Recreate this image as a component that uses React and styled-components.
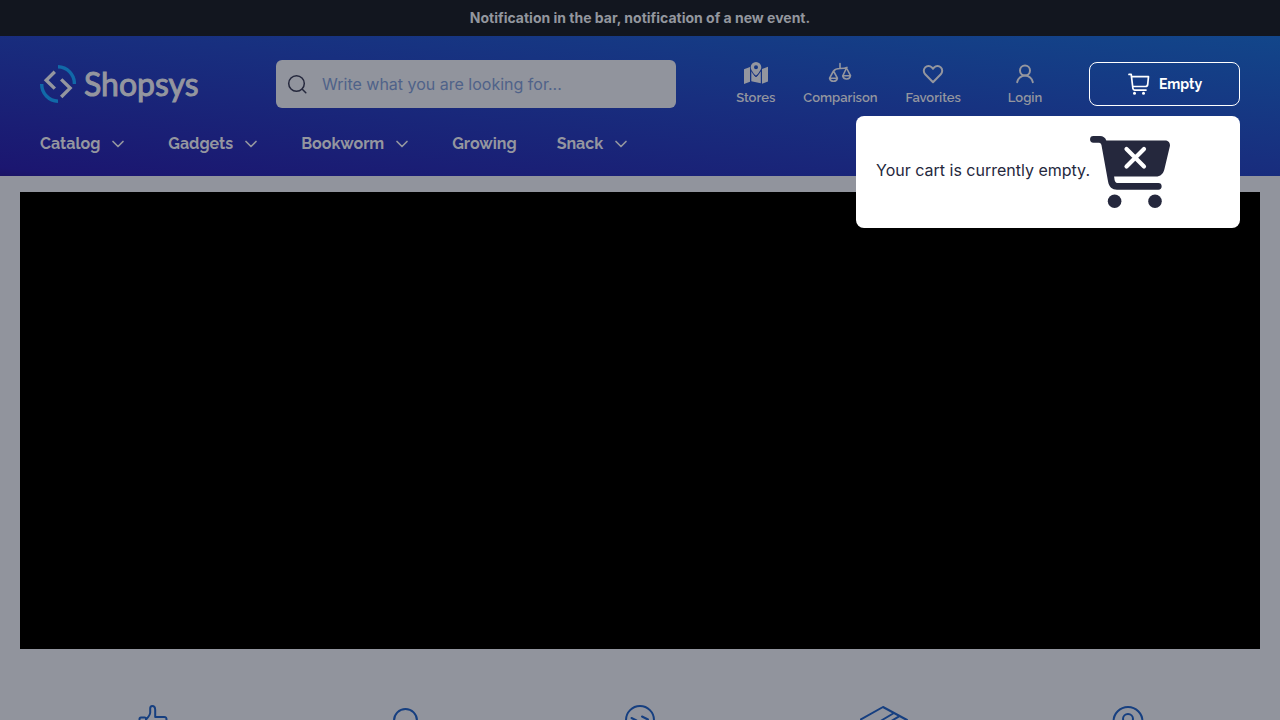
import React from "react";
import styled, { createGlobalStyle } from "styled-components";

const GlobalStyle = createGlobalStyle`
  *, *::before, *::after { box-sizing: border-box; }
  body {
    margin: 0;
    background: #91949d;
    color: #25283d;
    font-family: Inter, "Liberation Sans", sans-serif;
    font-size: 16px;
    line-height: 24px;
  }
`;

const heading = `Raleway, Lato, "Open Sans", sans-serif`;
const muted = "#94969f";

const NotificationBar = styled.div`
  padding: 8px 20px;
  background: #12161f;
  color: #93969e;
  font-size: 14px;
  line-height: 20px;
  font-weight: 700;
  text-align: center;
`;

const Header = styled.header`
  position: relative;
  padding: 24px 40px 20px;
  background: linear-gradient(to top right, #1b1464 0%, #1b1670 3%, #182f7f 55%, #12468a 100%);
`;

const TopRow = styled.div`
  display: flex;
  align-items: center;
`;

const Logo = styled.a`
  display: flex;
  align-items: center;
  gap: 8px;
  width: 236px;
  color: ${muted};
  font-family: Lato, "Liberation Sans", sans-serif;
  font-size: 32px;
  line-height: 40px;
  -webkit-text-stroke: 1px ${muted};
  text-decoration: none;
`;

const Search = styled.form`
  display: flex;
  align-items: center;
  gap: 15px;
  flex: 0 1 400px;
  height: 48px;
  padding: 0 11px;
  border-radius: 6px;
  background: #91949d;
  color: #25283d;
`;

const SearchButton = styled.button`
  display: flex;
  padding: 0;
  border: 0;
  background: none;
  color: inherit;
`;

const SearchInput = styled.input`
  flex: 1;
  min-width: 0;
  padding: 0;
  border: 0;
  outline: 0;
  background: none;
  color: inherit;
  font: inherit;
  &::placeholder { color: #4f6289; opacity: 1; }
`;

const Actions = styled.nav`
  display: flex;
  gap: 28px;
  margin-left: auto;
`;

const Action = styled.a`
  display: flex;
  flex-direction: column;
  align-items: center;
  gap: 4px;
  min-width: ${(p) => p.$width}px;
  color: ${muted};
  font-family: ${heading};
  font-size: 13px;
  line-height: 16px;
  font-weight: 600;
  text-decoration: none;
`;

const CartButton = styled.button`
  display: flex;
  align-items: center;
  justify-content: center;
  gap: 8px;
  width: 151px;
  height: 44px;
  margin-left: 28px;
  border: 1px solid #fff;
  border-radius: 8px;
  background: none;
  color: #fff;
  font-family: ${heading};
  font-size: 14px;
  font-weight: 700;
`;

const Menu = styled.nav`
  display: flex;
  gap: 40px;
  margin-top: 24px;
`;

const MenuLink = styled.a`
  display: flex;
  align-items: center;
  gap: 8px;
  color: ${muted};
  font-family: ${heading};
  font-size: 16px;
  font-weight: 700;
  text-decoration: none;
`;

const CartPopup = styled.div`
  position: absolute;
  top: 80px;
  right: 40px;
  z-index: 1;
  display: flex;
  align-items: center;
  width: 384px;
  padding: 20px;
  border-radius: 8px;
  background: #fff;
`;

const PopupText = styled.span`
  padding-bottom: 4px;
`;

const Banner = styled.section`
  margin: 16px 20px 0;
  aspect-ratio: 1240 / 457;
  background: #000;
`;

const Benefits = styled.section`
  display: grid;
  grid-template-columns: repeat(5, 1fr);
  gap: 20px;
  justify-items: center;
  padding: 56px 40px 24px;
  color: #163f80;
`;

const Icon = ({ w = 24, h = w, sw = 2, children }) => (
  <svg width={w} height={h} viewBox={`0 0 ${w} ${h}`} fill="none" stroke="currentColor" strokeWidth={sw}
    strokeLinecap="round" strokeLinejoin="round" aria-hidden="true">{children}</svg>
);

const LogoMark = () => (
  <Icon w={36} h={38} sw={3.4}>
    <g strokeLinecap="butt" strokeLinejoin="miter">
      <path d="M18 1.8A16.6 17 0 0 1 34.4 19M18 36.2A16.6 17 0 0 1 1.7 19" stroke="#1169a8" />
      <path d="M14.8 6.8 6.2 15.2 14.8 23.6M21.2 14.4l8.9 8.7-8.9 8.9" />
    </g>
  </Icon>
);

const StoresIcon = () => (
  <Icon sw={0}>
    <g fill="currentColor">
      <path d="M0 7.3 6 5v14.8L0 22zM18 7l6-2.3v14.8l-6 2.3zM7.3 8l3.7 5.5q1.1 1.2 2.2 0L16.8 9v12.3l-9.500-2.100z" />
      <path fillRule="evenodd" d="M12 0a5.3 5.3 0 0 0-5.3 5.3c0 2.9 4 7.8 5.3 8.2 1.3-.4 5.3-5.3 5.3-8.2A5.3 5.3 0 0 0 12 0m0 3.300a2 2 0 1 1 0 4 2 2 0 0 1 0-4" />
      <path d="m7 8.500 4 5.700q1 1 2 0l4-5.700" fill="none" stroke="#182f7f" strokeWidth=".9" />
    </g>
  </Icon>
);

const ScalesIcon = () => (
  <Icon sw={1.6}>
    <path d="M12 1.500v5M5.500 9C7 7.200 9 6.500 12 6.500s5 0 7-1.100M5.500 9l-3.900 7.200a4 4 0 0 0 7.800 0zM18.500 6l-3.800 8a4 4 0 0 0 7.800-.400zM1.600 16.200h7.800M14.700 13.800h7.800" />
  </Icon>
);

const HeartIcon = () => (
  <Icon>
    <path d="M12 20.300 4.200 12.200a4.800 4.800 0 0 1 0-6.800 4.600 4.600 0 0 1 6.600 0L12 6.700l1.200-1.300a4.600 4.600 0 0 1 6.600 0 4.800 4.800 0 0 1 0 6.800z" />
  </Icon>
);

const UserIcon = () => (
  <Icon><circle cx="12" cy="8.500" r="5" /><path d="M4.200 20.200a7.900 7.900 0 0 1 15.600 0" /></Icon>
);

const CartIcon = () => (
  <Icon sw={1.7}>
    <path d="M2 2.400h2.200l1.700 14q.200 1.700 1.800 1.700h11.300M4.800 4.700h16.700l-.800 7.800q-.300 2-2.200 2H6" />
    <g fill="currentColor" stroke="none"><circle cx="7.500" cy="21.300" r="1.500" /><circle cx="16.500" cy="21.300" r="1.500" /></g>
  </Icon>
);

const EmptyCartIcon = () => (
  <Icon w={80} h={72} sw={0}>
    <path fill="currentColor" d="M3.400 0H10c3 0 5.400 1.600 6.300 4.500H75c3.400 0 5.600 2.600 4.800 6l-5.400 22.700c-1 4.500-4 7.300-8.500 7.300H24.100l.500 3.400c.300 2 1.500 3.100 3.500 3.100h40.200a3.350 3.350 0 0 1 0 6.700H27c-4.700 0-8.100-3-8.900-8L11.500 9.300C11.200 7.500 10.500 6.700 9 6.700H3.400a3.350 3.350 0 0 1 0-6.700z" />
    <circle cx="24.600" cy="65.200" r="6.800" fill="currentColor" />
    <circle cx="65" cy="65.200" r="6.800" fill="currentColor" />
    <path d="m36.500 13 17.500 17.500M54 13 36.500 30.500" stroke="#fff" strokeWidth="4.200" />
  </Icon>
);

const Chevron = () => <Icon w={20} sw={1.7}><path d="m5 7.500 5 5 5-5" /></Icon>;

const menu = [["Catalog", true], ["Gadgets", true], ["Bookworm", true], ["Growing", false], ["Snack", true]];

const actions = [
  ["Stores", StoresIcon, 24],
  ["Comparison", ScalesIcon, 24],
  ["Favorites", HeartIcon, 24],
  ["Login", UserIcon, 72],
];

const benefits = [
  <path key="like" d="M18 40h-5q-1.500 0-1.500-1.500V14q0-1.500 1.500-1.500h4q1 0 1 1.500v26M18 14.500q4-4 4.200-7V3.500q0-2.500 2-2.500 3 0 3 4v7h9q2.500 0 2.300 2.500l-3 22.500q-.500 3-3 3H18" />,
  <><circle cx="33.500" cy="15.500" r="11.500" /><path d="M16 46c0-13 7-17 17.500-17S48 34 48 46" /></>,
  <><circle cx="24" cy="15" r="14" /><path d="m15.500 13 5 2.500-5 3.500M26 11.500l6 3-6 5" /></>,
  <path key="box" d="M0 15 23 2l24 13v20L23 48 0 35zM0 15l23 13 24-13M34 8 12 21M39.500 11.200 17 24.500M23 28v20" />,
  <><path d="M24 47C17 37 9.500 27 9.500 16.500a14.500 14.500 0 0 1 29 0C38.500 27 31 37 24 47z" /><circle cx="24" cy="14" r="5" /></>,
];

export default function App() {
  return (
    <>
      <GlobalStyle />
      <NotificationBar>Notification in the bar, notification of a new event.</NotificationBar>
      <Header>
        <TopRow>
          <Logo href="#"><LogoMark />Shopsys</Logo>
          <Search role="search">
            <SearchButton type="button" aria-label="Search">
              <Icon w={20} sw={1.5}><circle cx="9.500" cy="9.500" r="7.800" /><path d="m15.300 15.300 3.500 3.500" /></Icon>
            </SearchButton>
            <SearchInput type="search" aria-label="Search" placeholder="Write what you are looking for..." />
          </Search>
          <Actions aria-label="User">
            {actions.map(([label, Glyph, width]) => (
              <Action href="#" key={label} $width={width}><Glyph />{label}</Action>
            ))}
          </Actions>
          <CartButton type="button"><CartIcon />Empty</CartButton>
        </TopRow>
        <Menu aria-label="Main">
          {menu.map(([label, hasChildren]) => (
            <MenuLink href="#" key={label}>{label}{hasChildren && <Chevron />}</MenuLink>
          ))}
        </Menu>
        <CartPopup>
          <PopupText>Your cart is currently empty.</PopupText>
          <EmptyCartIcon />
        </CartPopup>
      </Header>
      <main>
        <Banner aria-label="Promotions" />
        <Benefits aria-label="Benefits">
          {benefits.map((shape, i) => <Icon key={i} w={48} sw={2}>{shape}</Icon>)}
        </Benefits>
      </main>
    </>
  );
}
